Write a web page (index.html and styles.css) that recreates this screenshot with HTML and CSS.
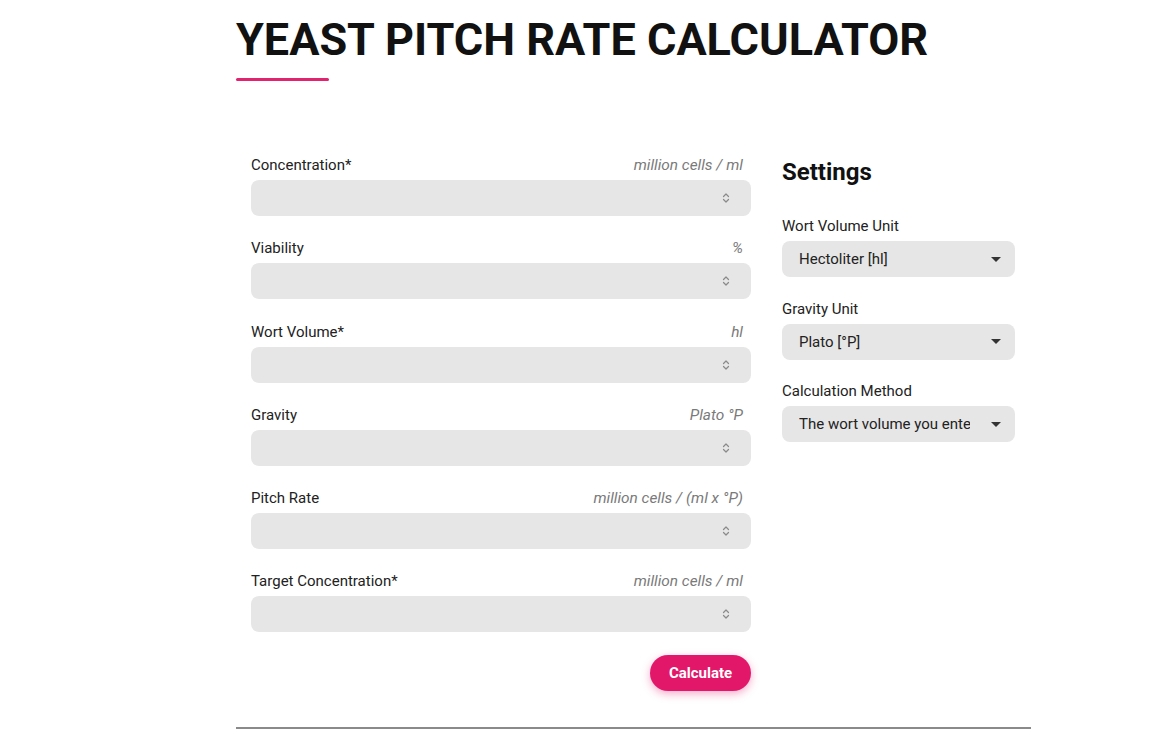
FILE: index.html
```html
<!DOCTYPE html>
<html lang="en">
<head>
<meta charset="utf-8">
<title>Yeast Pitch Rate Calculator</title>
<link rel="stylesheet" href="styles.css">
</head>
<body>
<div class="page">
  <h1 class="title">YEAST PITCH RATE CALCULATOR</h1>
  <div class="title-bar"></div>

  <div class="layout">
    <form class="calc">
      <div class="group">
        <div class="label-row"><span class="label">Concentration*</span><span class="unit">million cells / ml</span></div>
        <div class="field"><svg class="spin" width="8" height="12" viewBox="0 0 8 12"><path d="M1.5 4.5 L4 2 L6.5 4.5 M1.5 7.5 L4 10 L6.5 7.5" fill="none" stroke="#8a8a8a" stroke-width="1.2" stroke-linecap="round" stroke-linejoin="round"/></svg></div>
      </div>
      <div class="group">
        <div class="label-row"><span class="label">Viability</span><span class="unit">%</span></div>
        <div class="field"><svg class="spin" width="8" height="12" viewBox="0 0 8 12"><path d="M1.5 4.5 L4 2 L6.5 4.5 M1.5 7.5 L4 10 L6.5 7.5" fill="none" stroke="#8a8a8a" stroke-width="1.2" stroke-linecap="round" stroke-linejoin="round"/></svg></div>
      </div>
      <div class="group">
        <div class="label-row"><span class="label">Wort Volume*</span><span class="unit">hl</span></div>
        <div class="field"><svg class="spin" width="8" height="12" viewBox="0 0 8 12"><path d="M1.5 4.5 L4 2 L6.5 4.5 M1.5 7.5 L4 10 L6.5 7.5" fill="none" stroke="#8a8a8a" stroke-width="1.2" stroke-linecap="round" stroke-linejoin="round"/></svg></div>
      </div>
      <div class="group">
        <div class="label-row"><span class="label">Gravity</span><span class="unit">Plato °P</span></div>
        <div class="field"><svg class="spin" width="8" height="12" viewBox="0 0 8 12"><path d="M1.5 4.5 L4 2 L6.5 4.5 M1.5 7.5 L4 10 L6.5 7.5" fill="none" stroke="#8a8a8a" stroke-width="1.2" stroke-linecap="round" stroke-linejoin="round"/></svg></div>
      </div>
      <div class="group">
        <div class="label-row"><span class="label">Pitch Rate</span><span class="unit">million cells / (ml x °P)</span></div>
        <div class="field"><svg class="spin" width="8" height="12" viewBox="0 0 8 12"><path d="M1.5 4.5 L4 2 L6.5 4.5 M1.5 7.5 L4 10 L6.5 7.5" fill="none" stroke="#8a8a8a" stroke-width="1.2" stroke-linecap="round" stroke-linejoin="round"/></svg></div>
      </div>
      <div class="group">
        <div class="label-row"><span class="label">Target Concentration*</span><span class="unit">million cells / ml</span></div>
        <div class="field"><svg class="spin" width="8" height="12" viewBox="0 0 8 12"><path d="M1.5 4.5 L4 2 L6.5 4.5 M1.5 7.5 L4 10 L6.5 7.5" fill="none" stroke="#8a8a8a" stroke-width="1.2" stroke-linecap="round" stroke-linejoin="round"/></svg></div>
      </div>
      <div class="actions">
        <button type="button" class="btn">Calculate</button>
      </div>
    </form>

    <aside class="settings">
      <h2 class="settings-title">Settings</h2>
      <div class="sgroup">
        <div class="slabel">Wort Volume Unit</div>
        <div class="select"><span class="svalue">Hectoliter [hl]</span><span class="caret"></span></div>
      </div>
      <div class="sgroup">
        <div class="slabel">Gravity Unit</div>
        <div class="select"><span class="svalue">Plato [°P]</span><span class="caret"></span></div>
      </div>
      <div class="sgroup">
        <div class="slabel">Calculation Method</div>
        <div class="select"><span class="svalue clip">The wort volume you entered</span><span class="caret"></span></div>
      </div>
    </aside>
  </div>

  <hr class="rule">
</div>
</body>
</html>
```

FILE: styles.css
```css
* { box-sizing: border-box; }

html, body {
  margin: 0;
  padding: 0;
  background: #ffffff;
}

body {
  font-family: Roboto, "Liberation Sans", Arial, sans-serif;
  color: #212121;
}

.page {
  width: 795px;
  margin-left: 236px;
  padding-top: 14px;
}

.title {
  margin: 0;
  font-size: 45px;
  line-height: 52px;
  font-weight: 700;
  color: #111;
  letter-spacing: 0;
}

.title-bar {
  width: 93px;
  height: 3px;
  border-radius: 2px;
  background: #e0246d;
  margin-top: 12px;
}

.layout {
  display: grid;
  grid-template-columns: 530px 265px;
  margin-top: 74px;
}

.calc {
  padding: 0 15px;
}

.group {
  margin-bottom: 22.3px;
}

.label-row {
  display: flex;
  justify-content: space-between;
  align-items: center;
  height: 20px;
  margin-bottom: 5px;
  padding-right: 8px;
}

.label {
  font-size: 15px;
  color: #222;
}

.unit {
  font-size: 15.4px;
  font-style: italic;
  color: #7a7a7a;
}

.field {
  height: 36px;
  background: #e6e6e6;
  border-radius: 8px;
  display: flex;
  align-items: center;
  justify-content: flex-end;
  padding-right: 21px;
}

.spin {
  display: block;
}

.actions {
  display: flex;
  justify-content: flex-end;
}

.btn {
  font-family: Roboto, "Liberation Sans", Arial, sans-serif;
  font-size: 15px;
  font-weight: 700;
  color: #fff;
  background: #e3176a;
  border: none;
  border-radius: 18px;
  height: 36px;
  width: 101px;
  padding: 0;
  box-shadow: 0 3px 8px rgba(227, 23, 106, 0.35);
}

.settings {
  padding: 3px 16px 0 16px;
}

.settings-title {
  margin: 0 0 30px 0;
  font-size: 24px;
  line-height: 28px;
  font-weight: 700;
  color: #111;
}

.sgroup {
  margin-bottom: 21.5px;
}

.slabel {
  font-size: 15px;
  line-height: 20px;
  height: 20px;
  margin-bottom: 5px;
  color: #222;
}

.select {
  height: 36px;
  width: 233px;
  background: #e6e6e6;
  border-radius: 8px;
  display: flex;
  align-items: center;
  padding: 0 14px 0 17px;
}

.svalue {
  font-size: 15px;
  color: #222;
  flex: 1;
  white-space: nowrap;
  overflow: hidden;
}

.svalue.clip {
  flex: 0 0 171px;
  margin-right: auto;
}

.caret {
  width: 0;
  height: 0;
  border-left: 5px solid transparent;
  border-right: 5px solid transparent;
  border-top: 5px solid #333;
  margin-left: 10px;
}

.rule {
  margin: 36px 0 0 0;
  border: none;
  height: 2px;
  background: #8a8a8a;
}
```
